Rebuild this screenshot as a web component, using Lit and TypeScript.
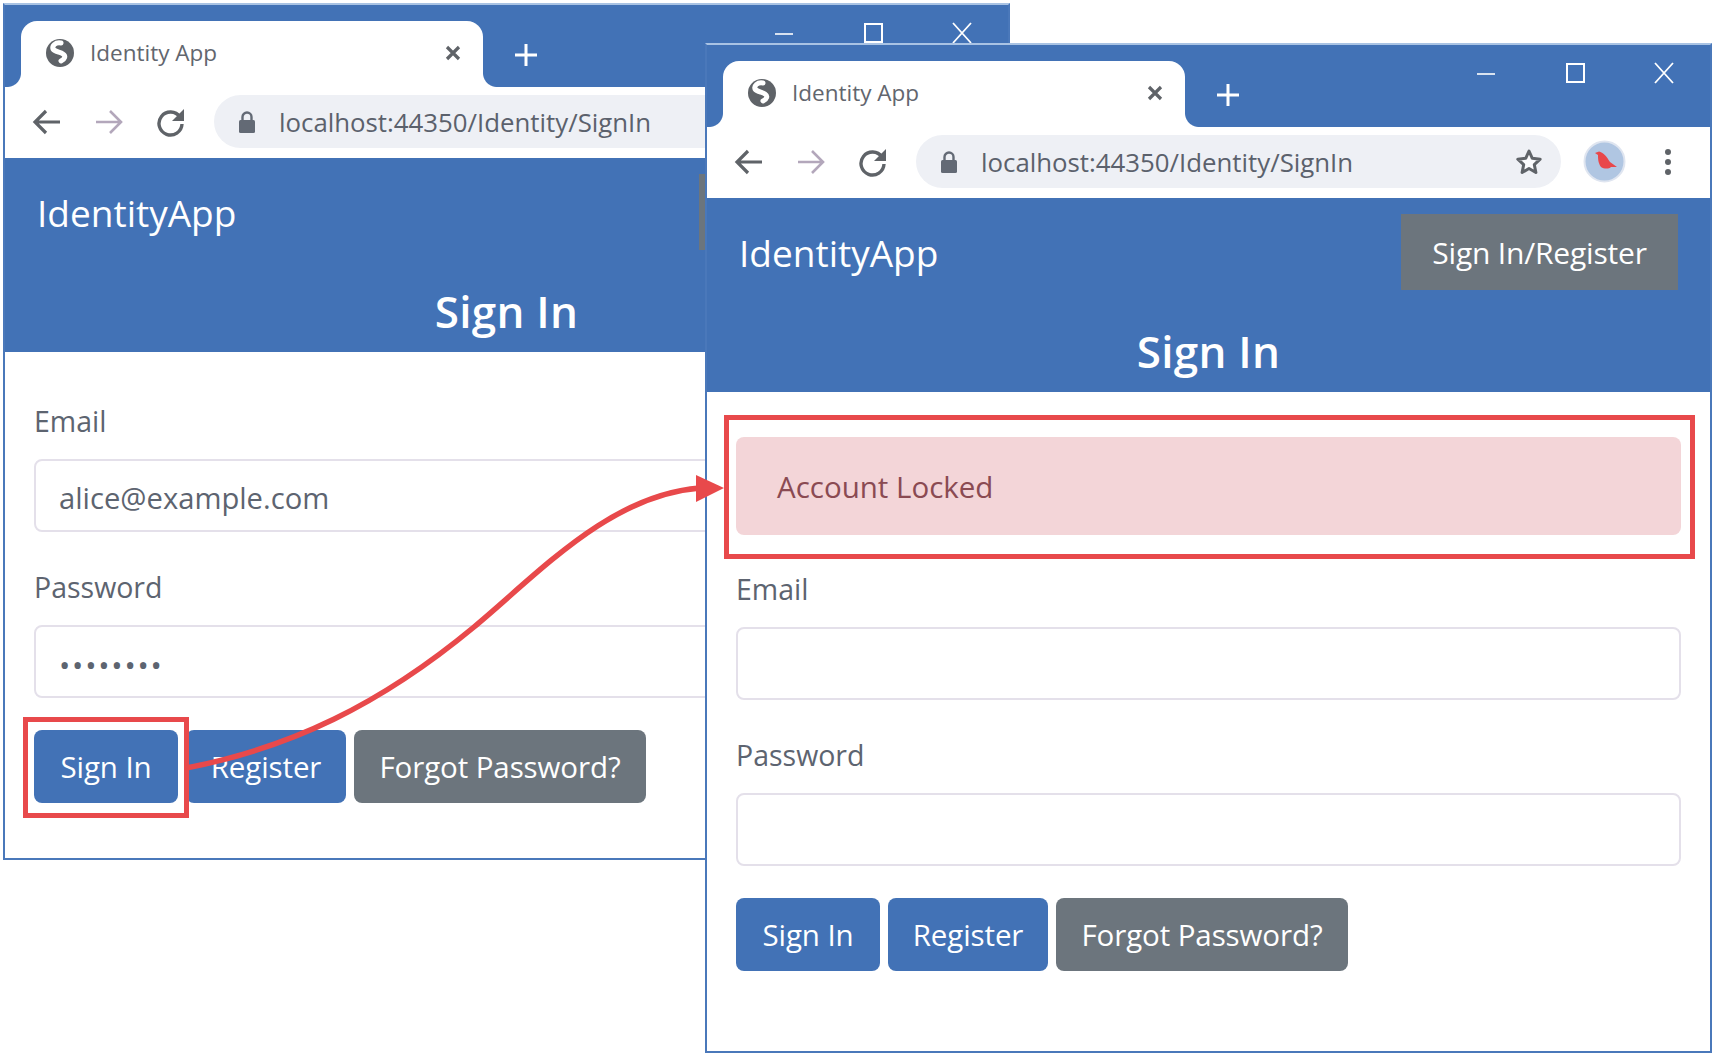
import { LitElement, html, css, svg } from "lit";
import { customElement, property } from "lit/decorators.js";

@customElement("browser-window")
class BrowserWindow extends LitElement {
  @property() email = "";
  @property() password = "";
  @property({ type: Boolean }) locked = false;
  @property({ type: Boolean }) covered = false;

  static styles = css`
    :host { display: flex; flex-direction: column; box-sizing: border-box; background: #fff; border: 2px solid #4a78ba; border-top-color: #a9c3e4; overflow: hidden;
      font-family: "Open Sans", "Noto Sans", sans-serif; color: #5d6470; }
    svg { display: block; flex: none; }
    .strip { height: 82px; flex: none; background: #4272b6; display: flex; align-items: flex-end; position: relative; padding-left: 16px; }
    .tab { width: 462px; height: 66px; background: #fff; border-radius: 16px 16px 0 0; display: flex; align-items: center; position: relative; box-sizing: border-box; padding: 0 0 3px 25px; }
    .tab::before, .tab::after { content: ""; position: absolute; bottom: 0; width: 14px; height: 14px; }
    .tab::before { left: -14px; background: radial-gradient(circle at 0 0, #4272b6 13.5px, #fff 14.5px); }
    .tab::after { right: -14px; background: radial-gradient(circle at 100% 0, #4272b6 13.5px, #fff 14.5px); }
    .title { font-size: 22.5px; margin-left: 16px; flex: 1; color: #62666e; }
    .close { margin-right: 22px; }
    .plus { margin: 0 0 20px 31px; }
    .controls { position: absolute; top: 12px; right: 34px; display: flex; gap: 65px; }
    .toolbar { height: 71px; flex: none; display: flex; align-items: center; box-sizing: border-box; padding: 0 0 2px 27px; }
    .nav { display: flex; align-items: center; gap: 32px; width: 168px; flex: none; }
    .omni { width: 645px; height: 53px; margin-left: 14px; border-radius: 27px; background: #eef0f5; display: flex; align-items: center; padding-left: 24px; box-sizing: border-box; flex: none; }
    .url { font-size: 25.8px; margin-left: 23px; flex: 1; color: #5b616c; white-space: nowrap; }
    .star { margin-right: 18px; }
    .avatar { margin-left: 22px; }
    .kebab { margin-left: 38px; }
    .head { background: #4272b6; height: 194px; flex: none; color: #fff; box-sizing: border-box; padding: 16px 32px 0 32px; display: flex; flex-direction: column; }
    .brandrow { display: flex; justify-content: space-between; align-items: center; height: 76px; }
    .brand { font-size: 37px; font-weight: 400; }
    .navbtn { width: 277px; height: 76px; background: #6c757d; display: flex; align-items: center; justify-content: center; font-size: 30px; letter-spacing: -0.2px; }
    .heading { text-align: center; font-size: 44px; font-weight: 600; letter-spacing: 0.3px; line-height: 50px; margin-top: 36px; }
    .body { padding: 45px 29px 0 29px; display: flex; flex-direction: column; }
    .alert { height: 98px; border-radius: 8px; background: #f3d5d8; color: #8a4a52; font-size: 29.5px; display: flex; align-items: center; padding-left: 41px; margin-bottom: 30px; }
    .label { font-size: 28.5px; line-height: 48px; margin-bottom: 14px; }
    .input { height: 73px; border: 2px solid #e4e0ea; border-radius: 8px; box-sizing: border-box; display: flex; align-items: center; padding: 4px 0 0 23px; font-size: 29.2px; margin-bottom: 31px; }
    .dots { letter-spacing: 1.8px; font-size: 30px; line-height: 1; padding-top: 2px; }
    .buttons { display: flex; gap: 8px; margin-top: 1px; }
    .btn { height: 73px; border-radius: 8px; color: #fff; display: flex; align-items: center; justify-content: center; font-size: 29.5px; letter-spacing: -0.1px; background: #4272b6; }
    .b1 { width: 144px; }
    .b2 { width: 160px; }
    .b3 { width: 292px; background: #6c757d; }
  `;

  globe() {
    return svg`<svg width="28" height="28" viewBox="0 0 28 28"><circle cx="14" cy="14" r="14" fill="#5f6368"/><path d="M15 4C9 3 6 7 7 10C9 13 14 13 17 15C20 17 19 20 15 22" fill="none" stroke="#fff" stroke-width="5" stroke-linecap="round"/></svg>`;
  }

  render() {
    return html`
      <div class="strip">
        <div class="tab">
          ${this.globe()}
          <span class="title">Identity App</span>
          <svg class="close" width="16" height="16" viewBox="0 0 16 16"><path d="M2 2l12 12M14 2L2 14" stroke="#5f6368" stroke-width="3.2"/></svg>
        </div>
        <svg class="plus" width="24" height="24" viewBox="0 0 24 24"><path d="M12 1v22M1 12h22" stroke="#fff" stroke-width="3"/></svg>
        <div class="controls">
          <svg width="24" height="30" viewBox="0 0 24 30"><path d="M3 17h18" stroke="#fff" stroke-width="1.6"/></svg>
          <svg width="24" height="30" viewBox="0 0 24 30"><rect x="4" y="7" width="17" height="18" fill="none" stroke="#fff" stroke-width="2"/></svg>
          <svg width="24" height="30" viewBox="0 0 24 30"><path d="M3 6l18 20M21 6L3 26" stroke="#fff" stroke-width="1.8"/></svg>
        </div>
      </div>
      <div class="toolbar">
        <div class="nav">
          <svg width="30" height="28" viewBox="0 0 30 28"><path d="M28 14H4M14 3L3 14l11 11" fill="none" stroke="#5f6368" stroke-width="3.2"/></svg>
          <svg width="30" height="28" viewBox="0 0 30 28"><path d="M2 14h24M16 3l11 11-11 11" fill="none" stroke="#b3a7bb" stroke-width="2.6"/></svg>
          <svg width="30" height="30" viewBox="0 0 30 30"><path d="M24 10A11.5 11.5 0 1 0 26 17" fill="none" stroke="#5f6368" stroke-width="3.4"/><path d="M28 2v12H16z" fill="#5f6368"/></svg>
        </div>
        <div class="omni">
          <svg width="18" height="24" viewBox="0 0 18 24"><path d="M4.5 11V7a4.5 4.5 0 0 1 9 0v4" fill="none" stroke="#636a75" stroke-width="2.4"/><rect x="1" y="10" width="16" height="13" rx="1.5" fill="#636a75"/></svg>
          <span class="url">localhost:44350/Identity/SignIn</span>
          <svg class="star" width="28" height="28" viewBox="0 0 28 28"><path d="M14 3l3.3 7.3 7.9.9-5.9 5.4 1.6 7.9-6.9-4-6.9 4 1.6-7.9-5.9-5.4 7.9-.9z" fill="#fbfbfd" stroke="#5f6368" stroke-width="3" stroke-linejoin="round"/></svg>
        </div>
        <svg class="avatar" width="43" height="43" viewBox="0 0 43 43"><circle cx="21.5" cy="21.5" r="20" fill="#b0c6e2" stroke="#dfe5f0" stroke-width="2"/><path d="M12 13L16 11.5C20 12 24 17 27 22L34 27L28 27C26 29 21 29 18 27C15 23 15 18 15 15Z" fill="#e8474a"/></svg>
        <svg class="kebab" width="8" height="28" viewBox="0 0 8 28"><circle cx="4" cy="4" r="3" fill="#5f6368"/><circle cx="4" cy="14" r="3" fill="#5f6368"/><circle cx="4" cy="24" r="3" fill="#5f6368"/></svg>
      </div>
      <div class="head">
        <div class="brandrow">
          <span class="brand">IdentityApp</span>
          <span class="navbtn">${this.covered ? "" : "Sign In/Register"}</span>
        </div>
        <div class="heading">Sign In</div>
      </div>
      <div class="body">
        ${this.locked ? html`<div class="alert">Account Locked</div>` : ""}
        <div class="label">Email</div>
        <div class="input">${this.email}</div>
        <div class="label">Password</div>
        <div class="input"><span class="dots">${this.password}</span></div>
        <div class="buttons">
          <div class="btn b1">Sign In</div>
          <div class="btn b2">Register</div>
          <div class="btn b3">Forgot Password?</div>
        </div>
      </div>
    `;
  }
}

@customElement("app-root")
class AppRoot extends LitElement {
  static styles = css`
    :host { display: block; position: relative; width: 1715px; height: 1055px; background: #fff; overflow: hidden; }
    browser-window { position: absolute; }
    .w1 { left: 3px; top: 3px; width: 1007px; height: 857px; }
    .w2 { left: 705px; top: 43px; width: 1007px; height: 1010px; }
    .mark { position: absolute; border: 5px solid #e8494b; box-sizing: border-box; }
    .m1 { left: 23px; top: 717px; width: 166px; height: 101px; }
    .m2 { left: 724px; top: 415px; width: 971px; height: 144px; }
    .arrow { position: absolute; left: 0; top: 0; }
  `;
  render() {
    return html`
      <browser-window class="w1" covered email="alice@example.com" password="••••••••"></browser-window>
      <browser-window class="w2" locked></browser-window>
      <div class="mark m1"></div>
      <div class="mark m2"></div>
      <svg class="arrow" width="1715" height="1055" viewBox="0 0 1715 1055">
        <path d="M186 768C290 748 380 705 474 627C540 572 610 495 700 488" fill="none" stroke="#e8494b" stroke-width="5.5"/>
        <path d="M696 475L724 488L696 502z" fill="#e8494b"/>
      </svg>
    `;
  }
}
